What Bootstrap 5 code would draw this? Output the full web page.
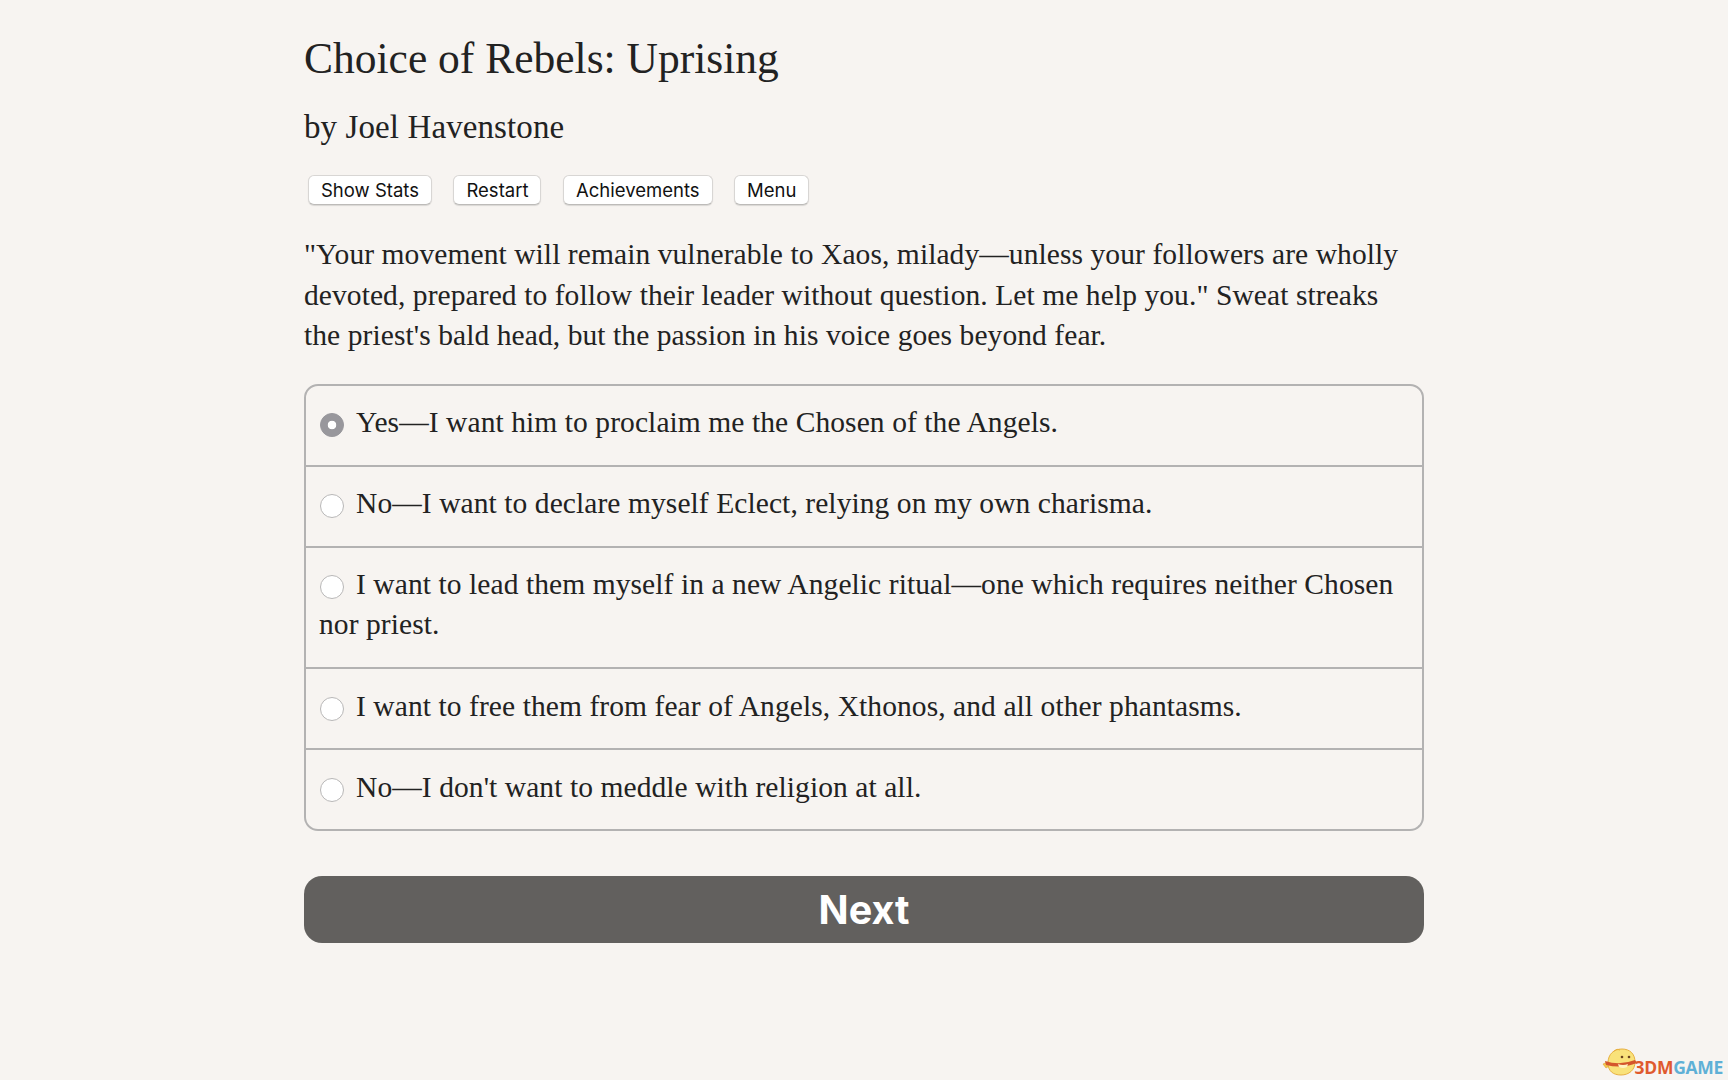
<!DOCTYPE html>
<html lang="en">
<head>
<meta charset="utf-8">
<title>Choice of Rebels: Uprising</title>
<link href="https://cdn.jsdelivr.net/npm/bootstrap@5.3.0/dist/css/bootstrap.min.css" rel="stylesheet">
<style>
html,body{height:100%}
body{background:#f7f4f1;color:#222;font-family:"Liberation Serif",serif;font-size:29.5px;line-height:40.5px;letter-spacing:.08px}
.game-wrap{width:1120px;margin-left:304px;padding-top:32px}
.game-title{font-size:43.5px;line-height:52px;font-weight:400;letter-spacing:0;margin:0 0 23px;color:#222}
.game-author{font-size:33px;line-height:40px;font-weight:400;letter-spacing:.1px;margin:0 0 28px;color:#222}
.game-actions{gap:21.5px;padding-left:4px;margin-bottom:29px}
.game-actions .btn{font-family:Inter,"Liberation Sans",sans-serif;font-size:18.5px;line-height:22px;letter-spacing:0;padding:3px 12px;background:#fff;color:#111;border:1px solid #d8d6d4;border-bottom-color:#bdbbb9;border-radius:6px;box-shadow:0 1px 1px rgba(0,0,0,.12)}
.game-text{margin:0 0 28px;padding-right:20px}
.choice-list{--bs-list-group-bg:transparent;--bs-list-group-color:#222;--bs-list-group-border-color:#b3b2b2;--bs-list-group-border-width:2px;--bs-list-group-border-radius:14px;--bs-list-group-item-padding-x:13px}
.choice-list .list-group-item{cursor:pointer;padding-top:16.3px;padding-bottom:22.3px}
.choice-radio.form-check-input{width:24px;height:24px;margin:0 12px 0 1px;vertical-align:-5px;float:none;background-color:#fff;border:1px solid #b8b7b7}
.choice-radio.form-check-input:checked{background-color:#98979c;border-color:#98979c;background-image:radial-gradient(circle,#fff 0,#fff 4px,transparent 4.6px)}
.next-btn.btn{display:block;width:100%;height:67px;margin-top:45px;padding:1px 0 0;background:#62605e;border:0;border-radius:18px;color:#fff;font-family:Inter,"Liberation Sans",sans-serif;font-weight:700;font-size:39.5px;line-height:1;letter-spacing:0}
.site-mark{position:absolute;right:0;bottom:0;display:flex;align-items:flex-end;padding:0 5px 3px 0;font-family:"Open Sans","Liberation Sans",sans-serif;font-weight:700;font-size:17.5px;line-height:20px;letter-spacing:-.3px;color:#df5a2e}
.site-mark svg{width:36px;height:30px;margin:0 -3px 0 0}
.mark-blue{color:#5fb0d6}
</style>
</head>
<body>
<main class="game-wrap">
  <h1 class="game-title">Choice of Rebels: Uprising</h1>
  <h2 class="game-author">by Joel Havenstone</h2>
  <div class="game-actions d-flex">
    <button type="button" class="btn">Show Stats</button>
    <button type="button" class="btn">Restart</button>
    <button type="button" class="btn">Achievements</button>
    <button type="button" class="btn">Menu</button>
  </div>
  <p class="game-text">"Your movement will remain vulnerable to Xaos, milady—unless your followers are wholly devoted, prepared to follow their leader without question. Let me help you." Sweat streaks the priest's bald head, but the passion in his voice goes beyond fear.</p>
  <form>
    <div class="list-group choice-list">
      <label class="list-group-item"><input class="form-check-input choice-radio" type="radio" name="choice" checked>Yes—I want him to proclaim me the Chosen of the Angels.</label>
      <label class="list-group-item"><input class="form-check-input choice-radio" type="radio" name="choice">No—I want to declare myself Eclect, relying on my own charisma.</label>
      <label class="list-group-item"><input class="form-check-input choice-radio" type="radio" name="choice">I want to lead them myself in a new Angelic ritual—one which requires neither Chosen nor priest.</label>
      <label class="list-group-item"><input class="form-check-input choice-radio" type="radio" name="choice">I want to free them from fear of Angels, Xthonos, and all other phantasms.</label>
      <label class="list-group-item"><input class="form-check-input choice-radio" type="radio" name="choice">No—I don't want to meddle with religion at all.</label>
    </div>
    <button type="button" class="btn next-btn">Next</button>
  </form>
</main>
<div class="site-mark">
  <svg viewBox="0 0 36 30" aria-hidden="true">
    <path d="M1 17l7-3 1 4-5 3z" fill="#f2c94f" stroke="#e0a030" stroke-width=".6"/>
    <path d="M6 16C6 7 12 2 20 2c8 0 13 5 13 13 0 8-6 13-14 13S6 24 6 16z" fill="#f9e27a" stroke="#e8b040" stroke-width="1"/>
    <path d="M12 4q3-3 6-1" fill="none" stroke="#e8b040" stroke-width="1"/>
    <path d="M3 14q15 5 30-1l2 3q-15 6-31 2z" fill="#d4562c"/>
    <path d="M16 17q5 2 10 0l-1 3q-4 2-8 0z" fill="#fff2c0"/>
    <circle cx="20" cy="10" r="1.3" fill="#6b4420"/><circle cx="27" cy="10" r="1.3" fill="#6b4420"/>
  </svg>
  <span>3DM<span class="mark-blue">GAME</span></span>
</div>
</body>
</html>
